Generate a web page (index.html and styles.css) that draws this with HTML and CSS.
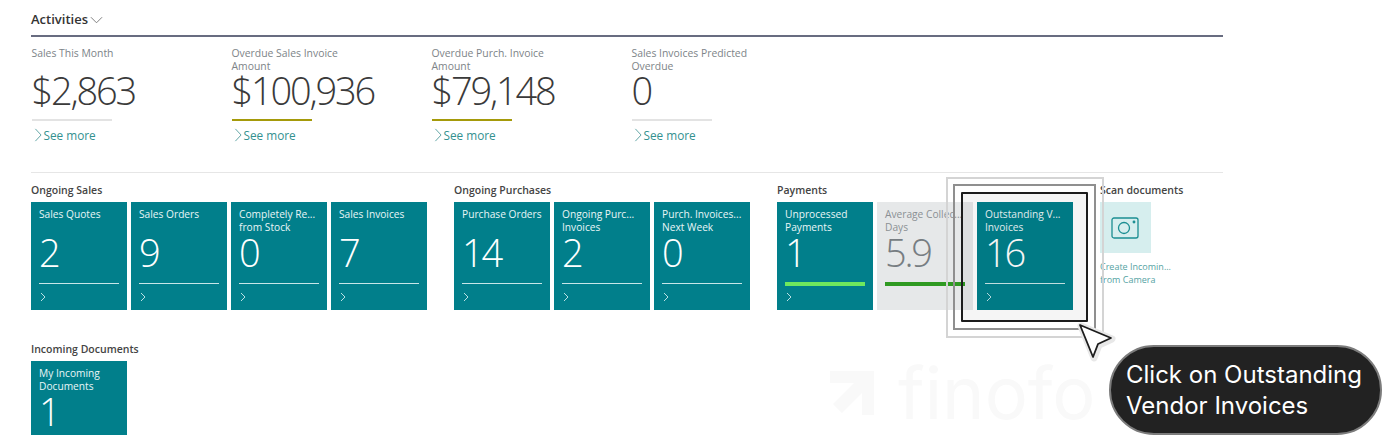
FILE: index.html
```html
<!DOCTYPE html>
<html lang="en">
<head>
<meta charset="utf-8">
<title>Activities</title>
<link rel="stylesheet" href="styles.css">
</head>
<body>
<main class="page">
  <header class="head">
    <h1 class="head-title">Activities</h1>
    <svg class="head-chev" viewBox="0 0 14 8"><path d="M1 1l6 6 6-6"/></svg>
  </header>
  <section class="kpis">
    <div class="kpi">
      <div class="kpi-label">Sales This Month</div>
      <div class="kpi-value">$2,863</div>
      <div class="kpi-bar"></div>
      <a class="kpi-more"><svg viewBox="0 0 8 16"><path d="M1 1l6.5 7L1 15"/></svg>See more</a>
    </div>
    <div class="kpi">
      <div class="kpi-label">Overdue Sales Invoice<br>Amount</div>
      <div class="kpi-value">$100,936</div>
      <div class="kpi-bar warn"></div>
      <a class="kpi-more"><svg viewBox="0 0 8 16"><path d="M1 1l6.5 7L1 15"/></svg>See more</a>
    </div>
    <div class="kpi">
      <div class="kpi-label">Overdue Purch. Invoice<br>Amount</div>
      <div class="kpi-value">$79,148</div>
      <div class="kpi-bar warn"></div>
      <a class="kpi-more"><svg viewBox="0 0 8 16"><path d="M1 1l6.5 7L1 15"/></svg>See more</a>
    </div>
    <div class="kpi">
      <div class="kpi-label">Sales Invoices Predicted<br>Overdue</div>
      <div class="kpi-value">0</div>
      <div class="kpi-bar"></div>
      <a class="kpi-more"><svg viewBox="0 0 8 16"><path d="M1 1l6.5 7L1 15"/></svg>See more</a>
    </div>
  </section>
  <section class="cues">
    <div class="group">
      <h2 class="group-title">Ongoing Sales</h2>
      <div class="tiles">
        <div class="tile"><div class="tile-label">Sales Quotes</div><div class="tile-num">2</div><div class="tile-rule"></div><svg class="tile-chev" viewBox="0 0 6 10"><path d="M1 1l4 4-4 4"/></svg></div>
        <div class="tile"><div class="tile-label">Sales Orders</div><div class="tile-num">9</div><div class="tile-rule"></div><svg class="tile-chev" viewBox="0 0 6 10"><path d="M1 1l4 4-4 4"/></svg></div>
        <div class="tile"><div class="tile-label">Completely Re...<br>from Stock</div><div class="tile-num">0</div><div class="tile-rule"></div><svg class="tile-chev" viewBox="0 0 6 10"><path d="M1 1l4 4-4 4"/></svg></div>
        <div class="tile"><div class="tile-label">Sales Invoices</div><div class="tile-num">7</div><div class="tile-rule"></div><svg class="tile-chev" viewBox="0 0 6 10"><path d="M1 1l4 4-4 4"/></svg></div>
      </div>
    </div>
    <div class="group">
      <h2 class="group-title">Ongoing Purchases</h2>
      <div class="tiles">
        <div class="tile"><div class="tile-label">Purchase Orders</div><div class="tile-num">14</div><div class="tile-rule"></div><svg class="tile-chev" viewBox="0 0 6 10"><path d="M1 1l4 4-4 4"/></svg></div>
        <div class="tile"><div class="tile-label">Ongoing Purc...<br>Invoices</div><div class="tile-num">2</div><div class="tile-rule"></div><svg class="tile-chev" viewBox="0 0 6 10"><path d="M1 1l4 4-4 4"/></svg></div>
        <div class="tile"><div class="tile-label">Purch. Invoices...<br>Next Week</div><div class="tile-num">0</div><div class="tile-rule"></div><svg class="tile-chev" viewBox="0 0 6 10"><path d="M1 1l4 4-4 4"/></svg></div>
      </div>
    </div>
    <div class="group">
      <h2 class="group-title">Payments</h2>
      <div class="tiles">
        <div class="tile"><div class="tile-label">Unprocessed<br>Payments</div><div class="tile-num">1</div><div class="tile-rule good"></div><svg class="tile-chev" viewBox="0 0 6 10"><path d="M1 1l4 4-4 4"/></svg></div>
        <div class="tile muted"><div class="tile-label">Average Collec...<br>Days</div><div class="tile-num">5.9</div><div class="tile-rule ok"></div></div>
        <div class="tile"><div class="tile-label">Outstanding V...<br>Invoices</div><div class="tile-num">16</div><div class="tile-rule"></div><svg class="tile-chev" viewBox="0 0 6 10"><path d="M1 1l4 4-4 4"/></svg></div>
      </div>
    </div>
    <div class="group">
      <h2 class="group-title">Scan documents</h2>
      <div class="scan">
        <svg class="scan-icon" viewBox="0 0 28 22"><rect x="1" y="1" width="26" height="20" rx="2"/><circle cx="13" cy="11" r="5.5"/><circle cx="23" cy="5" r=".8"/></svg>
      </div>
      <div class="scan-label">Create Incomin...<br>from Camera</div>
    </div>
    <div class="group wide">
      <h2 class="group-title">Incoming Documents</h2>
      <div class="tiles">
        <div class="tile"><div class="tile-label">My Incoming<br>Documents</div><div class="tile-num">1</div></div>
      </div>
    </div>
  </section>
</main>

<div class="watermark"><svg class="watermark-logo" viewBox="0 0 46 44"><path d="M0 0h44v12H26l18 0v32H32V22L12 42 3 33 24 12H0z"/></svg><span>finofo</span></div>
<div class="focus f-outer"></div>
<div class="focus f-mid"></div>
<div class="focus f-inner"></div>
<svg class="cursor" viewBox="0 0 42 42">
  <path class="cursor-halo" d="M5 4l31 13-13 6-5 13z"/>
  <path class="cursor-arrow" d="M5 4l31 13-13 6-5 13z"/>
</svg>
<div class="callout">Click on Outstanding<br>Vendor Invoices</div>
</body>
</html>
```
FILE: styles.css
```css
* { box-sizing: border-box; }
html, body { margin: 0; padding: 0; height: 435px; overflow: hidden; background: #fff; }
body { font-family: "Open Sans", "Noto Sans", sans-serif; color: #333; position: relative; }
.page { padding: 0 160px 0 31px; }
.head { height: 37px; border-bottom: 2px solid #686c80; display: flex; align-items: center; gap: 2px; padding-top: 3px; }
.head-title { margin: 0; font-size: 13px; font-weight: 600; color: #333; line-height: 18px; }
.head-chev { width: 13px; height: 8px; margin-top: 2px; fill: none; stroke: #777; stroke-width: 1; }
.kpis { display: flex; height: 136px; border-bottom: 1px solid #e6e6e6; padding-top: 10px; padding-left: .5px; }
.kpi { width: 200px; position: relative; }
.kpi-label { font-size: 10.4px; line-height: 13px; color: #7d8488; height: 26px; white-space: nowrap; }
.kpi-value { font-size: 38px; font-weight: 300; line-height: 34px; color: #3a3a3a; height: 34px; letter-spacing: -2.2px; }
.kpi-bar { width: 80px; height: 2px; background: #e3e3e3; margin-top: 12px; }
.kpi-bar.warn { background: #a59a0a; }
.kpi-more { display: flex; align-items: center; gap: 2px; font-size: 11.8px; line-height: 16px; color: #33918f; margin-top: 6px; padding-left: 2px; }
.kpi-more svg { width: 8px; height: 14px; fill: none; stroke: #4f9a9a; stroke-width: 1; }
.cues { display: flex; flex-wrap: wrap; column-gap: 27px; row-gap: 32px; padding-top: 10px; }
.group { flex: none; }
.group.wide { flex-basis: 100%; }
.group-title { margin: 0 0 5px; font-size: 10.5px; line-height: 14px; font-weight: 600; color: #444; }
.tiles { display: flex; gap: 4px; }
.tile { width: 96px; height: 108px; background: #017f8b; color: #e9f6f7; padding: 6px 8px 0; position: relative; }
.tile-label { font-size: 10.2px; line-height: 13px; height: 26px; white-space: nowrap; }
.tile-num { font-size: 38px; font-weight: 300; line-height: 36px; height: 36px; color: #fff; letter-spacing: -2.2px; }
.tile-rule { height: 1px; background: #c8e6e8; margin-top: 13px; width: 80px; }
.tile-rule.good { height: 4px; background: #6ee85e; margin-top: 12px; }
.tile-rule.ok { height: 4px; background: #2f9a22; margin-top: 12px; }
.tile-chev { position: absolute; left: 9px; bottom: 8px; width: 6px; height: 10px; fill: none; stroke: #b9e0e3; stroke-width: 1; }
.tile.muted { background: #e6e8e9; color: #8b9094; }
.tile.muted .tile-num { color: #777d82; }
.scan { width: 51px; height: 51px; background: #d6eeee; display: flex; align-items: center; justify-content: center; padding-right: 2px; }
.scan-icon { width: 28px; height: 22px; fill: none; stroke: #1b8e92; stroke-width: 1.3; }
.scan-label { font-size: 9px; line-height: 12.5px; color: #55a3a3; margin-top: 8px; white-space: nowrap; }
.watermark { position: absolute; left: 830px; top: 355px; display: flex; align-items: center; gap: 22px; font-size: 72px; line-height: 76px; color: #f9f9f9; font-family: "Inter", sans-serif; }
.watermark-logo { width: 46px; height: 44px; fill: #f9f9f9; }
.focus { position: absolute; }
.f-outer { left: 946px; top: 177px; width: 158px; height: 161px; border: 2px solid #d4d4d4; }
.f-mid { left: 953px; top: 184px; width: 143px; height: 146px; border: 2px solid #8f8f8f; }
.f-inner { left: 961px; top: 192px; width: 127px; height: 130px; border: 2px solid #1c1c1c; background: rgba(0,0,0,.04); border-radius: 1px; }
.cursor { position: absolute; left: 1075px; top: 321px; width: 42px; height: 42px; overflow: visible; }
.cursor-halo { fill: #e8e8e8; stroke: #e8e8e8; stroke-width: 7; stroke-linejoin: round; transform: translate(1px, 1px); }
.cursor-arrow { fill: #fff; stroke: #1c1c1c; stroke-width: 1.8; stroke-linejoin: round; }
.callout { position: absolute; left: 1109px; top: 345px; width: 273px; height: 90px; border-radius: 45px; background: #222; border: 2px solid #7c7c7c; color: #fff; font-family: "Inter", "Lato", sans-serif; font-size: 24px; line-height: 31px; padding: 12px 0 0 15px; white-space: nowrap; }
```
